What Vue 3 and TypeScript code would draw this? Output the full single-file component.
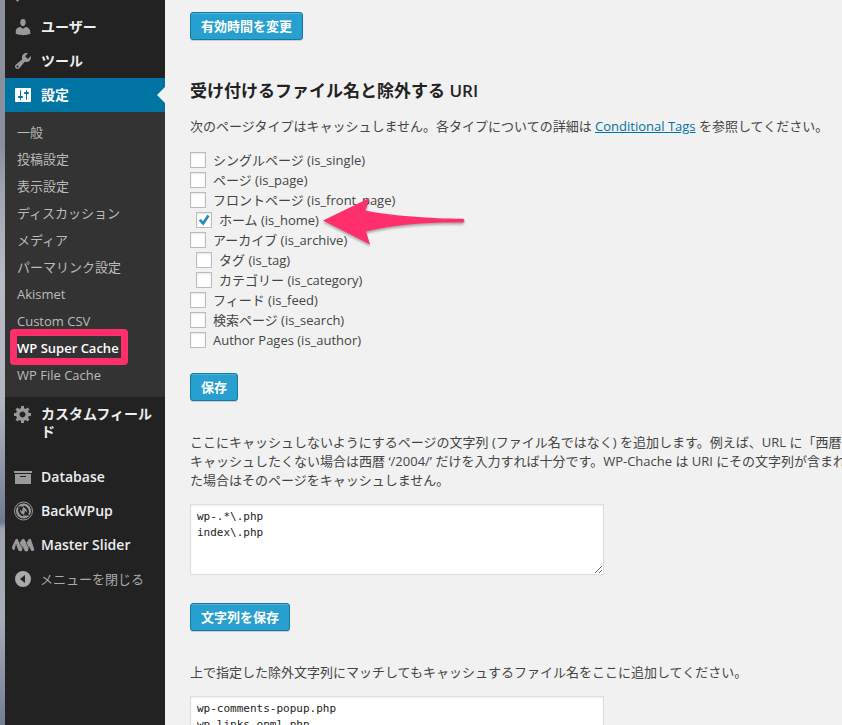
<script setup lang="ts">
import { reactive, ref } from 'vue'

interface SubItem {
  label: string
  current?: boolean
}

interface PageType {
  id: string
  label: string
  nested?: boolean
  checked: boolean
}

const settingsItems: SubItem[] = [
  { label: '一般' },
  { label: '投稿設定' },
  { label: '表示設定' },
  { label: 'ディスカッション' },
  { label: 'メディア' },
  { label: 'パーマリンク設定' },
  { label: 'Akismet' },
  { label: 'Custom CSV' },
  { label: 'WP Super Cache', current: true },
  { label: 'WP File Cache' },
]

const pageTypes = reactive<PageType[]>([
  { id: 'is_single', label: 'シングルページ', checked: false },
  { id: 'is_page', label: 'ページ', checked: false },
  { id: 'is_front_page', label: 'フロントページ', checked: false },
  { id: 'is_home', label: 'ホーム', nested: true, checked: true },
  { id: 'is_archive', label: 'アーカイブ', checked: false },
  { id: 'is_tag', label: 'タグ', nested: true, checked: false },
  { id: 'is_category', label: 'カテゴリー', nested: true, checked: false },
  { id: 'is_feed', label: 'フィード', checked: false },
  { id: 'is_search', label: '検索ページ', checked: false },
  { id: 'is_author', label: 'Author Pages', checked: false },
])

const rejectedStrings = ref('wp-.*\\.php\nindex\\.php')
const acceptedFiles = ref('wp-comments-popup.php\nwp-links-opml.php\nwp-locations.php')
</script>

<template>
  <div class="screen">
    <div class="backdrop"></div>

    <nav class="menu" aria-label="管理メニュー">
      <div class="menu-cut">
        <svg class="icon" viewBox="0 0 20 20" aria-hidden="true">
          <path d="M3 17.5l3-3 1.500 1.500-3 2.800z" />
        </svg>
      </div>
      <a class="item" href="#users">
        <svg class="icon" viewBox="0 0 20 20" aria-hidden="true">
          <path d="M10 9.250c-2.270 0-2.730-3.440-2.730-3.440C7 4.020 7.820 2 9.970 2c2.160 0 2.980 2.020 2.710 3.810 0 0-.410 3.440-2.680 3.440zm0 2.570L12.720 10c2.390 0 4.520 2.330 4.520 4.530v2.490s-3.650 1.130-7.240 1.130c-3.650 0-7.240-1.130-7.240-1.130v-2.490c0-2.250 1.940-4.480 4.470-4.480z" />
        </svg>
        <span>ユーザー</span>
      </a>
      <a class="item" href="#tools">
        <svg class="icon" viewBox="0 0 20 20" aria-hidden="true">
          <path d="M16.680 9.770c-1.340 1.340-3.300 1.670-4.950.990l-5.410 6.520c-.990.990-2.590.990-3.580 0s-.990-2.590 0-3.570l6.520-5.420c-.680-1.650-.350-3.610.990-4.950 1.280-1.280 3.120-1.620 4.720-1.060l-2.890 2.890 2.820 2.820 2.860-2.870c.530 1.580.180 3.390-1.080 4.650zM3.810 16.210c.400.390 1.040.390 1.430 0 .400-.400.400-1.040 0-1.430-.390-.400-1.030-.400-1.430 0-.390.390-.390 1.030 0 1.430z" />
        </svg>
        <span>ツール</span>
      </a>
      <a class="item open" href="#settings">
        <svg class="icon" viewBox="0 0 20 20" aria-hidden="true">
          <path d="M18 16V4c0-.55-.45-1-1-1H3c-.55 0-1 .45-1 1v12c0 .55.45 1 1 1h14c.55 0 1-.45 1-1zM8 11h1c.55 0 1 .45 1 1s-.45 1-1 1H8v1.500c0 .28-.22.5-.5.5s-.5-.22-.5-.5V13H6c-.55 0-1-.45-1-1s.45-1 1-1h1V5.500c0-.28.22-.5.5-.5s.5.22.5.5V11zm5-2h-1c-.55 0-1-.45-1-1s.45-1 1-1h1V5.500c0-.28.22-.5.5-.5s.5.22.5.5V7h1c.55 0 1 .45 1 1s-.45 1-1 1h-1v5.500c0 .28-.22.5-.5.5s-.5-.22-.5-.5V9z" />
        </svg>
        <span>設定</span>
      </a>
      <ul class="submenu">
        <li v-for="item in settingsItems" :key="item.label">
          <a href="#settings" :class="{ current: item.current }">{{ item.label }}</a>
        </li>
      </ul>
      <a class="item tall" href="#custom-fields">
        <svg class="icon" viewBox="0 0 20 20" aria-hidden="true">
          <path d="M18 12h-2.180c-.17.700-.44 1.350-.81 1.930l1.540 1.540-2.100 2.100-1.540-1.540c-.58.360-1.230.630-1.910.790V19H8v-2.180c-.68-.16-1.330-.43-1.910-.79l-1.540 1.540-2.120-2.120 1.540-1.540c-.36-.58-.63-1.230-.79-1.910H1V9.030h2.170c.16-.70.44-1.350.80-1.940L2.430 5.550l2.100-2.100 1.540 1.540c.58-.37 1.240-.64 1.930-.81V2h3v2.180c.68.160 1.330.430 1.910.790l1.540-1.540 2.120 2.120-1.540 1.540c.36.590.640 1.240.800 1.940H18V12zm-8.500 1.500c1.660 0 3-1.340 3-3s-1.340-3-3-3-3 1.340-3 3 1.340 3 3 3z" />
        </svg>
        <span>カスタムフィールド</span>
      </a>
      <a class="item" href="#database">
        <svg class="icon" viewBox="0 0 20 20" aria-hidden="true">
          <path d="M19 4v2H1V4h18zM2 7h16v10H2V7zm11 3V9H7v1h6z" />
        </svg>
        <span>Database</span>
      </a>
      <a class="item" href="#backwpup">
        <svg class="icon" viewBox="0 0 20 20" aria-hidden="true">
          <circle cx="10.500" cy="10" r="9" fill="none" stroke="currentColor" stroke-width="1" />
          <circle cx="10.500" cy="10" r="7.500" />
          <g fill="none" stroke="#222" stroke-width="2">
            <path d="M6.200 7.500C5.500 11.500 7.500 14 10.500 14.500" />
            <path d="M14.800 12.500C15.500 8.500 13.500 6 10.500 5.500" />
          </g>
          <path d="M4.500 5.500H10L9 10.500zM16.500 14.500H11L12 9.500z" fill="#222" />
        </svg>
        <span>BackWPup</span>
      </a>
      <a class="item" href="#master-slider">
        <svg class="icon wide" viewBox="0 0 24 20" aria-hidden="true">
          <path d="M1 12L4.500 4.500Q5.500 3 6.800 4.500L8.500 8 11 4.500Q12 3 13.500 4.500L15.500 8 17.500 4.500Q18.800 3 20 4.500L23.300 14.500Q23 16.500 20.500 16L18 11.500 17 16Q15 17 13.500 15.500L11.800 11.500 11 15.500Q9.500 17 7.500 15.500L5.200 10 3.500 15Q1 15.500 1 12z" />
          <path d="M5.300 9L4 14M8.500 8L11.500 13M15.200 8L17.800 13" fill="none" stroke="#222" stroke-width=".6" />
        </svg>
        <span>Master Slider</span>
      </a>
      <button class="item collapse" type="button">
        <svg class="icon" viewBox="0 0 20 20" aria-hidden="true">
          <path fill-rule="evenodd" d="M10 2a8 8 0 1 0 0 16 8 8 0 0 0 0-16zM12 6v8l-5-4z" />
        </svg>
        <span>メニューを閉じる</span>
      </button>
    </nav>

    <main class="content">
      <button class="primary" type="button">有効時間を変更</button>

      <h3>受け付けるファイル名と除外する URI</h3>
      <p class="line intro">
        次のページタイプはキャッシュしません。各タイプについての詳細は
        <a href="#conditional-tags">Conditional Tags</a> を参照してください。
      </p>

      <ul class="types">
        <li v-for="type in pageTypes" :key="type.id" :class="{ nested: type.nested }">
          <label>
            <input v-model="type.checked" type="checkbox" />
            <span>{{ type.label }} ({{ type.id }})</span>
          </label>
          <svg v-if="type.id === 'is_home'" class="arrow" viewBox="0 0 148 56" aria-hidden="true">
            <path d="M2 24.500L48.500 2 44.500 14.500C70 20 110 22.500 142 22.800Q145 24.500 142 26.500C110 26 75 28 45 35.500L49 48.500z" />
          </svg>
        </li>
      </ul>

      <button class="primary" type="button">保存</button>

      <div class="note">
        <label class="line" for="rejected">ここにキャッシュしないようにするページの文字列 (ファイル名ではなく) を追加します。例えば、URL に「西暦<br />キャッシュしたくない場合は西暦 ‘/2004/’ だけを入力すれば十分です。WP-Chache は URI にその文字列が含まれ<br />た場合はそのページをキャッシュしません。</label>
      </div>
      <textarea id="rejected" v-model="rejectedStrings" rows="4" spellcheck="false"></textarea>

      <button class="primary" type="button">文字列を保存</button>

      <div class="note">
        <label class="line" for="accepted">上で指定した除外文字列にマッチしてもキャッシュするファイル名をここに追加してください。</label>
      </div>
      <textarea id="accepted" v-model="acceptedFiles" rows="4" spellcheck="false"></textarea>
    </main>
  </div>
</template>

<style>
body {
  background: #f1f1f1;
}
</style>

<style scoped>
.screen {
  display: flex;
  height: 100vh;
  overflow: hidden;
  background: #f1f1f1;
  color: #444;
  font: 13px/19px "Open Sans", "Noto Sans CJK JP", sans-serif;
}

ul {
  margin: 0;
  padding: 0;
  list-style: none;
}

.backdrop {
  flex: 0 0 5px;
  background: linear-gradient(#8d909c, #8b8f9d 20%, #a3a6b2 27%, #b8bbc5 38%, #b4b7c2 55%, #6f7a92 72%, #a3a6ae 73%, #a7acb8 85%, #737d95);
}

.menu {
  flex: 0 0 160px;
  background: #222;
}

.menu-cut {
  display: flex;
  align-items: flex-end;
  height: 10px;
  padding: 0 8px 7px;
  box-sizing: border-box;
  color: #999;
}

.item {
  position: relative;
  display: flex;
  align-items: flex-start;
  gap: 8px;
  width: 100%;
  height: 34px;
  padding: 7px 8px;
  box-sizing: border-box;
  color: #eee;
  font-size: 14px;
  font-weight: 600;
  line-height: 18px;
  text-decoration: none;
}

.icon {
  flex: none;
  width: 20px;
  height: 20px;
  fill: currentColor;
  color: #999;
}

.icon.wide {
  width: 24px;
  margin: 0 -2px;
}

.item span {
  min-width: 0;
  padding-top: 1px;
  word-break: break-all;
}

.item.open {
  background: #0074a2;
  color: #fff;
}

.item.open .icon {
  color: #fff;
}

.item.open::after {
  content: "";
  position: absolute;
  top: 9px;
  right: 0;
  border: 8px solid transparent;
  border-left-width: 0;
  border-right-color: #f1f1f1;
}

.item.tall {
  height: 63px;
  padding-right: 4px;
}

.item.collapse {
  gap: 7px;
  border: 0;
  background: none;
  color: #aaa;
  font-family: inherit;
  font-size: 13px;
  font-weight: 400;
  text-align: left;
}

.collapse .icon {
  color: #aaa;
}

.submenu {
  padding: 7px 0 8px;
  background: #333;
}

.submenu a {
  position: relative;
  display: block;
  padding: 4px 12px;
  color: #bbb;
  text-decoration: none;
}

.submenu .current {
  color: #fff;
  font-weight: 600;
}

.submenu .current::after {
  content: "";
  position: absolute;
  top: -6px;
  left: 5px;
  width: 104px;
  height: 22px;
  border: 7px solid #ff2f6c;
  border-radius: 4px;
}

.content {
  flex: 1;
  min-width: 0;
  padding: 12px 0 0 25px;
  overflow: hidden;
}

.primary {
  display: block;
  height: 28px;
  padding: 0 10px;
  border: 1px solid #1478a4;
  border-radius: 3px;
  background: #27a0cf;
  box-shadow: inset 0 1px 0 rgba(120, 200, 230, 0.5), 0 1px 0 rgba(0, 0, 0, 0.15);
  color: #fff;
  font: 600 13px/24px "Open Sans", "Noto Sans CJK JP", sans-serif;
}

h3 {
  margin: 39px 0 14px;
  color: #222;
  font-size: 17px;
  font-weight: 600;
  line-height: 24px;
}

.line {
  display: block;
  margin: 0;
  white-space: nowrap;
}

.intro a {
  color: #0074a2;
}

.types {
  padding: 14px 0 23px;
}

.types li {
  position: relative;
  height: 20px;
}

.types .nested {
  padding-left: 6px;
}

.types label {
  display: inline-flex;
  align-items: center;
  gap: 7px;
  height: 20px;
}

.types input {
  appearance: none;
  display: grid;
  place-items: center;
  width: 16px;
  height: 16px;
  margin: 0;
  border: 1px solid #bbb;
  background: #fff;
  box-shadow: inset 0 1px 2px rgba(0, 0, 0, 0.1);
}

.types input:checked::before {
  content: "";
  width: 12px;
  height: 12px;
  background: #1e8cbe;
  clip-path: polygon(6% 55%, 24% 42%, 41% 61%, 78% 6%, 96% 18%, 45% 95%);
}

.arrow {
  position: absolute;
  top: -14px;
  left: 131px;
  width: 148px;
  height: 56px;
  fill: #ff2f6c;
  filter: drop-shadow(0 2px 1px rgba(0, 0, 0, 0.3));
  pointer-events: none;
}

.note {
  padding: 32px 0 14px;
}

textarea {
  display: block;
  width: 100%;
  max-width: 414px;
  height: 71px;
  margin: 0 0 28px;
  padding: 4px 6px;
  box-sizing: border-box;
  border: 1px solid #ddd;
  background: #fff;
  box-shadow: inset 0 1px 2px rgba(0, 0, 0, 0.07);
  color: #222;
  font: 11px/16px "DejaVu Sans Mono", monospace;
  overflow: hidden;
  resize: both;
}
</style>
